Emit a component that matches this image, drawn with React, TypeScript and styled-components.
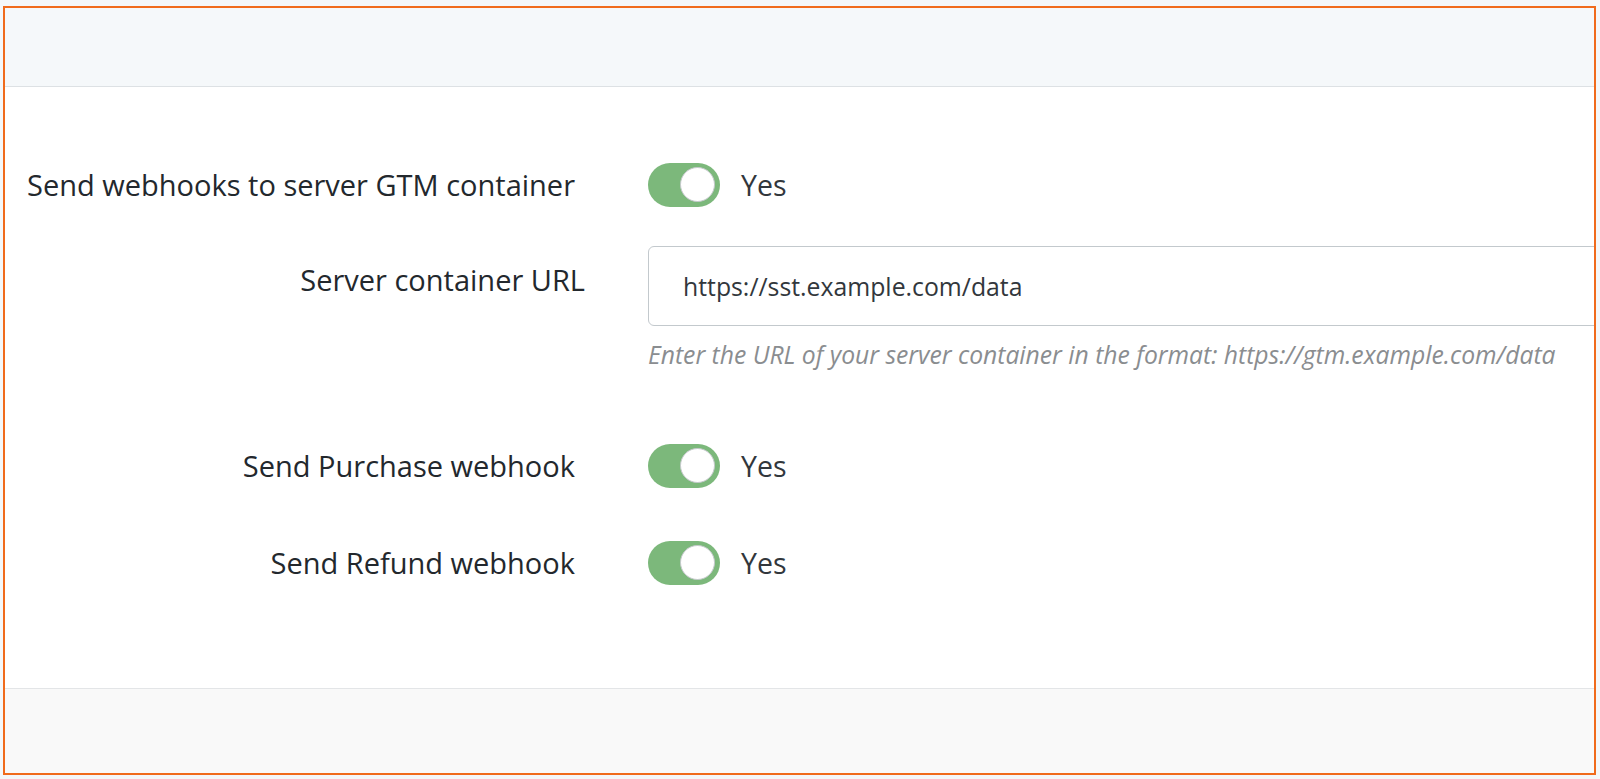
import React, { useState } from "react";
import styled, { createGlobalStyle } from "styled-components";

const GlobalStyle = createGlobalStyle`
  html, body {
    margin: 0;
    padding: 0;
    background: #ffffff;
    font-family: "Open Sans", "Noto Sans", sans-serif;
  }
`;

const Page = styled.div`
  width: 1600px;
  height: 779px;
  padding: 6px 4px 4px 3px;
  box-sizing: border-box;
  background: #f4f7f9;
`;

const Frame = styled.div`
  height: 100%;
  box-sizing: border-box;
  border: 2px solid #f06b1c;
  background: #ffffff;
  overflow: hidden;
  display: flex;
  flex-direction: column;
`;

const Header = styled.div`
  height: 78px;
  flex-shrink: 0;
  background: #f5f8fa;
  border-bottom: 1px solid #dde1e4;
`;

const Body = styled.div`
  flex: 1;
  padding-top: 76px;
`;

const Footer = styled.div`
  height: 84px;
  flex-shrink: 0;
  background: #f9f9f9;
  border-top: 1px solid #e3e5e7;
`;

const Row = styled.div<{ $space: number; $align?: "center" | "start" }>`
  display: grid;
  grid-template-columns: 570px 1fr;
  column-gap: 73px;
  align-items: ${(p) => (p.$align === "start" ? "start" : "center")};
  margin-top: ${(p) => p.$space}px;
`;

const Label = styled.label<{ $shift?: number; $padTop?: number }>`
  font-size: 29px;
  line-height: 36px;
  color: #23282d;
  text-align: right;
  margin-right: ${(p) => -(p.$shift ?? 0)}px;
  padding-top: ${(p) => p.$padTop ?? 0}px;
  white-space: nowrap;
`;

const ToggleWrap = styled.div`
  display: flex;
  align-items: center;
  gap: 21px;
`;

const Track = styled.button<{ $on: boolean }>`
  position: relative;
  width: 72px;
  height: 44px;
  border-radius: 22px;
  border: none;
  padding: 0;
  cursor: pointer;
  background: ${(p) => (p.$on ? "#7cb87b" : "#c9ced2")};
`;

const Knob = styled.span<{ $on: boolean }>`
  position: absolute;
  top: 4px;
  left: ${(p) => (p.$on ? "32px" : "4px")};
  width: 35px;
  height: 35px;
  box-sizing: border-box;
  border-radius: 50%;
  background: #ffffff;
  border: 1px solid #c4c8cb;
`;

const ToggleText = styled.span`
  font-size: 28.5px;
  color: #32373c;
`;

const Field = styled.div`
  display: flex;
  flex-direction: column;
`;

const Input = styled.input`
  width: 1000px;
  height: 80px;
  box-sizing: border-box;
  padding: 0 0 0 34px;
  border: 1px solid #c3c9cd;
  border-radius: 6px;
  font-family: "Open Sans", "Noto Sans", sans-serif;
  font-size: 24.8px;
  color: #32373c;
  outline: none;
`;

const Help = styled.p`
  margin: 12px 0 0 0;
  font-size: 24.7px;
  line-height: 34px;
  font-style: italic;
  color: #8a8d90;
  white-space: nowrap;
`;

const Toggle = ({ initial = true }: { initial?: boolean }) => {
  const [on, setOn] = useState(initial);
  return (
    <ToggleWrap>
      <Track $on={on} onClick={() => setOn(!on)} aria-pressed={on}>
        <Knob $on={on} />
      </Track>
      <ToggleText>{on ? "Yes" : "No"}</ToggleText>
    </ToggleWrap>
  );
};

const App = () => {
  const [url, setUrl] = useState("https://sst.example.com/data");

  return (
    <Page>
      <GlobalStyle />
      <Frame>
        <Header />
        <Body>
          <Row $space={0}>
            <Label>Send webhooks to server GTM container</Label>
            <Toggle />
          </Row>
          <Row $space={39} $align="start">
            <Label $padTop={16} $shift={10}>
              Server container URL
            </Label>
            <Field>
              <Input value={url} onChange={(e) => setUrl(e.target.value)} />
              <Help>
                Enter the URL of your server container in the format:
                https://gtm.example.com/data
              </Help>
            </Field>
          </Row>
          <Row $space={72}>
            <Label>Send Purchase webhook</Label>
            <Toggle />
          </Row>
          <Row $space={53}>
            <Label>Send Refund webhook</Label>
            <Toggle />
          </Row>
        </Body>
        <Footer />
      </Frame>
    </Page>
  );
};

export default App;
